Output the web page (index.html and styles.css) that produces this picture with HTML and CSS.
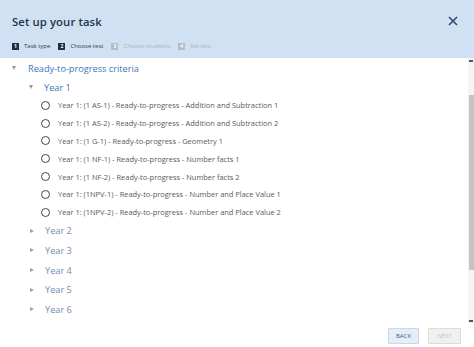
FILE: index.html
```html
<!DOCTYPE html>
<html>
<head>
<meta charset="utf-8">
<link rel="stylesheet" href="styles.css">
</head>
<body>
<div class="dialog">
  <div class="header">
    <div class="title-row">
      <h1 class="title">Set up your task</h1>
      <svg class="close" width="10" height="10" viewBox="0 0 10 10"><path d="M1 1 L9 9 M9 1 L1 9" stroke="#2c4a70" stroke-width="1.6" fill="none"/></svg>
    </div>
    <div class="steps">
      <span class="step"><span class="num">1</span>Task type</span>
      <span class="step"><span class="num">2</span>Choose test</span>
      <span class="step off"><span class="num">3</span>Choose students</span>
      <span class="step off"><span class="num">4</span>Set test</span>
    </div>
  </div>
  <div class="body">
    <div class="tree">
      <div class="node l1"><span class="tri down"></span>Ready-to-progress criteria</div>
      <div class="node l2 open"><span class="tri down"></span>Year 1</div>
      <div class="opt"><span class="radio"></span>Year 1: (1 AS-1) - Ready-to-progress - Addition and Subtraction 1</div>
      <div class="opt"><span class="radio"></span>Year 1: (1 AS-2) - Ready-to-progress - Addition and Subtraction 2</div>
      <div class="opt"><span class="radio"></span>Year 1: (1 G-1) - Ready-to-progress - Geometry 1</div>
      <div class="opt"><span class="radio"></span>Year 1: (1 NF-1) - Ready-to-progress - Number facts 1</div>
      <div class="opt"><span class="radio"></span>Year 1: (1 NF-2) - Ready-to-progress - Number facts 2</div>
      <div class="opt"><span class="radio"></span>Year 1: (1NPV-1) - Ready-to-progress - Number and Place Value 1</div>
      <div class="opt"><span class="radio"></span>Year 1: (1NPV-2) - Ready-to-progress - Number and Place Value 2</div>
      <div class="node l2 closed"><span class="tri right"></span>Year 2</div>
      <div class="node l2 closed"><span class="tri right"></span>Year 3</div>
      <div class="node l2 closed"><span class="tri right"></span>Year 4</div>
      <div class="node l2 closed"><span class="tri right"></span>Year 5</div>
      <div class="node l2 closed"><span class="tri right"></span>Year 6</div>
    </div>
    <div class="scrollbar">
      <span class="arrow"></span>
      <span class="thumb"></span>
      <span class="arrow"></span>
    </div>
  </div>
  <div class="footer">
    <button class="btn back">BACK</button>
    <button class="btn next">NEXT</button>
  </div>
</div>
</body>
</html>
```
FILE: styles.css
```css
* { box-sizing: border-box; }
html, body { margin: 0; padding: 0; background: #ffffff; }
body { font-family: "Open Sans", "Noto Sans", sans-serif; width: 474px; height: 347px; overflow: hidden; }
.dialog { display: flex; flex-direction: column; height: 347px; }
.header { background: #d0e1f4; height: 58px; padding: 0 16px 0 12px; display: flex; flex-direction: column; }
.title-row { display: flex; align-items: center; justify-content: space-between; height: 40px; padding-top: 2px; }
.title { margin: 0; font-size: 11.3px; font-weight: 600; color: #25354a; letter-spacing: 0.1px; }
.close { display: block; margin-right: 0; }
.steps { display: flex; align-items: center; gap: 8px; height: 12px; font-size: 6px; color: #2a3a4d; }
.step { display: flex; align-items: center; gap: 5px; }
.num { width: 7px; height: 7px; background: #1f2e42; color: #fff; font-size: 5px; display: flex; align-items: center; justify-content: center; font-weight: 700; }
.step.off { color: #aab4c0; }
.step.off .num { background: #b4bcc6; }
.body { flex: 1; display: flex; }
.tree { flex: 1; padding-top: 0; }
.node { display: flex; align-items: center; color: #3b78b8; }
.l1 { height: 20px; padding-left: 12px; font-size: 9.2px; }
.l2 { padding-left: 29px; font-size: 9.2px; }
.l2.open { height: 18.5px; }
.l2.closed { height: 19.6px; color: #6f8fb2; }
.tri { width: 0; height: 0; margin-right: 11px; }
.l1 .tri { margin-right: 12px; }
.tri.down { border-left: 2.5px solid transparent; border-right: 2.5px solid transparent; border-top: 4px solid #7f9fc3; }
.tri.right { border-top: 2.5px solid transparent; border-bottom: 2.5px solid transparent; border-left: 4px solid #8aa5c4; margin-left: 1px; }
.opt { height: 17.8px; display: flex; align-items: center; padding-left: 41px; font-size: 7.45px; color: #555b62; }
.radio { width: 9px; height: 9px; border: 1.2px solid #444; border-radius: 50%; margin-right: 8px; flex: none; }
.scrollbar { width: 6px; display: flex; flex-direction: column; align-items: stretch; background: #f4f4f4; padding: 2px 0 1px 1px; }
.arrow { height: 2px; background: #555; width: 4px; }
.thumb { margin: 33px 0 50px 0; flex: 1; background: #c3c3c3; }
.footer { height: 24px; display: flex; justify-content: flex-end; align-items: flex-start; gap: 9px; padding: 5px 13px 0 0; }
.btn { font-family: "Open Sans", sans-serif; font-size: 6px; height: 16px; padding: 0; display: flex; align-items: center; justify-content: center; border-radius: 1px; }
.back { width: 31px; background: #e3eef9; border: 1px solid #c9d8e8; color: #4b5d73; }
.next { width: 33px; background: #f0f0f0; border: 1px solid #dcdcdc; color: #c6c6c6; }
```
